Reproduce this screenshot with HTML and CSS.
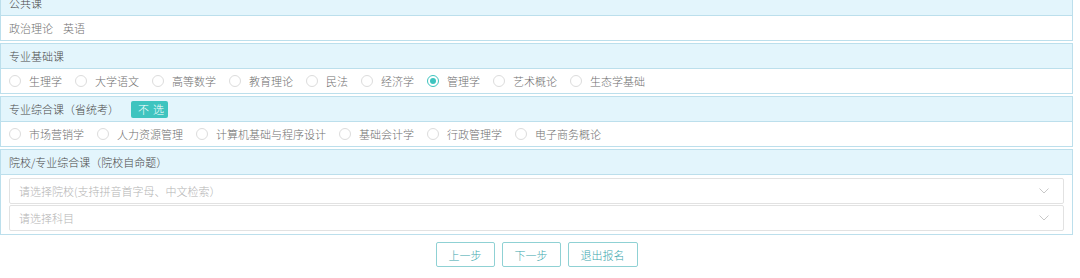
FILE: index.html
```html
<!DOCTYPE html>
<html lang="zh-CN">
<head>
    <meta charset="UTF-8">
    <title>报名 - 选择科目</title>
    <link rel="stylesheet" href="styles.css">
</head>
<body>
    <div class="subject-form">
        <div class="panel">
            <div class="panel-title">公共课</div>
            <div class="panel-body">
                <span class="fixed-item">政治理论</span>
                <span class="fixed-item">英语</span>
            </div>
        </div>

        <div class="panel">
            <div class="panel-title">专业基础课</div>
            <div class="panel-body">
                <label class="radio"><span class="radio-dot"></span>生理学</label>
                <label class="radio"><span class="radio-dot"></span>大学语文</label>
                <label class="radio"><span class="radio-dot"></span>高等数学</label>
                <label class="radio"><span class="radio-dot"></span>教育理论</label>
                <label class="radio"><span class="radio-dot"></span>民法</label>
                <label class="radio"><span class="radio-dot"></span>经济学</label>
                <label class="radio checked"><span class="radio-dot"></span>管理学</label>
                <label class="radio"><span class="radio-dot"></span>艺术概论</label>
                <label class="radio"><span class="radio-dot"></span>生态学基础</label>
            </div>
        </div>

        <div class="panel">
            <div class="panel-title">专业综合课（省统考）<span class="tag">不选</span></div>
            <div class="panel-body">
                <label class="radio"><span class="radio-dot"></span>市场营销学</label>
                <label class="radio"><span class="radio-dot"></span>人力资源管理</label>
                <label class="radio"><span class="radio-dot"></span>计算机基础与程序设计</label>
                <label class="radio"><span class="radio-dot"></span>基础会计学</label>
                <label class="radio"><span class="radio-dot"></span>行政管理学</label>
                <label class="radio"><span class="radio-dot"></span>电子商务概论</label>
            </div>
        </div>

        <div class="panel">
            <div class="panel-title">院校/专业综合课（院校自命题）</div>
            <div class="panel-body selects">
                <div class="select">
                    <span>请选择院校(支持拼音首字母、中文检索）</span>
                    <svg class="arrow" width="10" height="6" viewBox="0 0 10 6"><path d="M0.5 0.5 L5 5 L9.5 0.5" fill="none" stroke="#c8c8c8" stroke-width="1"/></svg>
                </div>
                <div class="select">
                    <span>请选择科目</span>
                    <svg class="arrow" width="10" height="6" viewBox="0 0 10 6"><path d="M0.5 0.5 L5 5 L9.5 0.5" fill="none" stroke="#c8c8c8" stroke-width="1"/></svg>
                </div>
            </div>
        </div>

        <div class="actions">
            <button class="btn">上一步</button>
            <button class="btn">下一步</button>
            <button class="btn">退出报名</button>
        </div>
    </div>
</body>
</html>
```

FILE: styles.css
```css
body {
    margin: 0;
    font-family: "Noto Sans CJK SC", "Noto Sans", sans-serif;
    font-size: 11px;
    font-weight: 300;
    color: #555;
    background: #fff;
}
.subject-form {
    width: 1073px;
    margin-top: -10px;
}
.panel {
    border: 1px solid #bcdfec;
    background: #fff;
    margin-bottom: 2px;
}
.panel-title {
    display: flex;
    align-items: center;
    height: 24px;
    padding-left: 8px;
    background: #e3f5fc;
    border-bottom: 1px solid #bcdfec;
    color: #4a4a4a;
}
.panel-body {
    display: flex;
    align-items: center;
    height: 24px;
    padding: 0 8px;
    color: #707070;
}
.fixed-item {
    margin-right: 10px;
}
.tag {
    display: inline-block;
    margin-left: 12px;
    padding-left: 7px;
    height: 17px;
    line-height: 17px;
    background: #3ec4bf;
    color: #fff;
    letter-spacing: 4px;
    border-radius: 2px;
}
.radio {
    display: flex;
    align-items: center;
    margin-right: 13px;
    cursor: pointer;
}
.radio-dot {
    box-sizing: border-box;
    width: 12px;
    height: 12px;
    margin-right: 8px;
    border: 1px solid #dcdcdc;
    border-radius: 50%;
    background: #fff;
    position: relative;
}
.radio.checked .radio-dot {
    border-color: #3ec4bf;
}
.radio.checked .radio-dot::after {
    content: "";
    position: absolute;
    left: 2px;
    top: 2px;
    width: 6px;
    height: 6px;
    border-radius: 50%;
    background: #3ec4bf;
}
.selects {
    display: block;
    height: auto;
    padding: 3px 8px;
}
.select {
    display: flex;
    align-items: center;
    justify-content: space-between;
    height: 24px;
    padding: 0 10px 0 9px;
    border: 1px solid #e2e2e2;
    border-radius: 2px;
    color: #b4b4b4;
    margin-bottom: 1px;
}
.select:last-child {
    margin-bottom: 0;
}
.arrow {
    margin-right: 4px;
}
.actions {
    display: flex;
    justify-content: center;
    gap: 7px;
    margin-top: 7px;
}
.btn {
    height: 25px;
    padding: 0 12px;
    border: 1px solid #8fd1d4;
    border-radius: 2px;
    background: #fff;
    color: #3aa7ad;
    font-family: inherit;
    font-size: 11px;
    font-weight: 300;
    cursor: pointer;
}
```
